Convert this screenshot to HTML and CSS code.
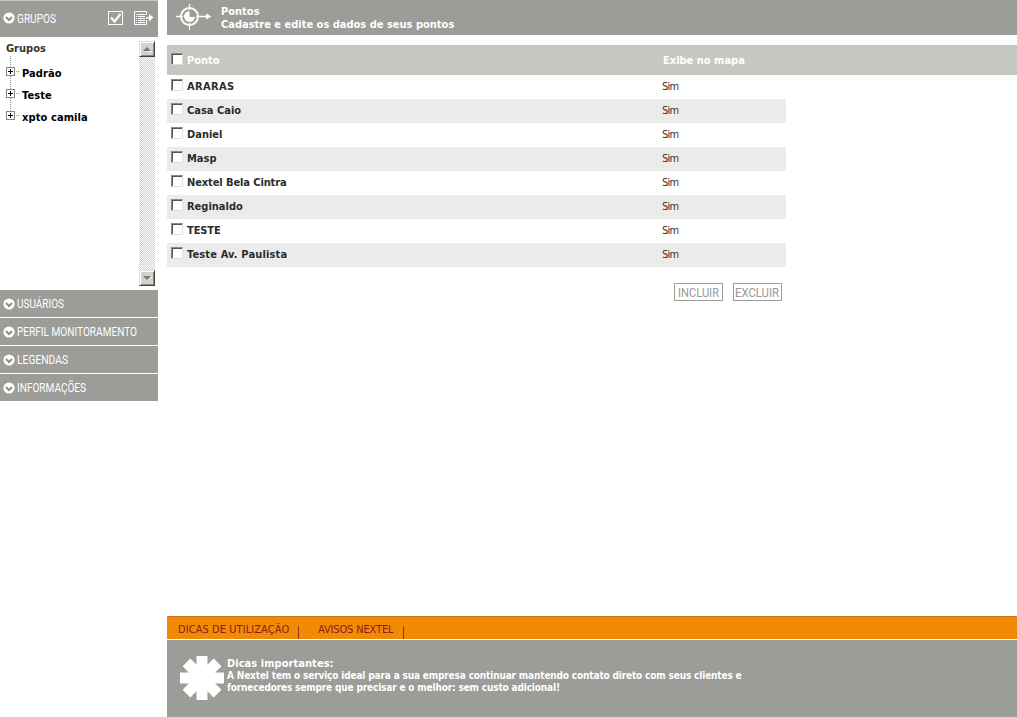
FILE: index.html
```html
<!DOCTYPE html>
<html lang="pt-BR">
<head>
<meta charset="utf-8">
<title>Pontos</title>
<link rel="stylesheet" href="styles.css">
</head>
<body>
<svg class="defs" width="0" height="0">
  <symbol id="chevron" viewBox="0 0 12 12"><circle cx="6" cy="6" r="5.6" fill="#fff"/><path d="M3 5l3 3 3-3" fill="none" stroke="#8e8e8b" stroke-width="2"/></symbol>
</svg>
<div class="app">
  <aside class="sidebar">
    <div class="side-head">
      <svg class="chev"><use href="#chevron"/></svg>
      <svg class="label" width="130" height="18"><text x="0" y="14" textLength="39" lengthAdjust="spacingAndGlyphs">GRUPOS</text></svg>
      <svg class="tool check" width="15" height="14" viewBox="0 0 15 14" fill="none" stroke="#fff"><rect x=".5" y=".5" width="14" height="13"/><path d="M3 6.500l3.500 4L12.500 3" stroke-width="2.200"/></svg>
      <svg class="tool" width="20" height="14" viewBox="0 0 20 14" fill="none" stroke="#fff"><path d="M12.500 4V.5H.5v13h12V9M2 3.500h1m1 0h7M2 5.500h1m1 0h7M2 7.500h1m1 0h7M2 9.500h1m1 0h7M2 11.500h1m1 0h7"/><path d="M12 6h3V3l4.500 3.500L15 10.500V7.500h-3z" fill="#fff" stroke="none"/></svg>
    </div>
    <div class="tree-box">
      <div class="tree">
        <div class="root">Grupos</div>
        <ul class="nodes">
          <li><i class="plus"></i><i class="dots"></i><span>Padrão</span></li>
          <li><i class="plus"></i><i class="dots"></i><span>Teste</span></li>
          <li><i class="plus"></i><i class="dots"></i><span>xpto camila</span></li>
        </ul>
      </div>
      <div class="scroll">
        <div class="arrow"><svg width="9" height="5" viewBox="0 0 9 5"><path d="M1 5h8v-1z" fill="#fff"/><path d="M0 4h8L4 0z" fill="#777"/></svg></div>
        <div class="track"></div>
        <div class="arrow"><svg width="9" height="5" viewBox="0 0 9 5"><path d="M5 5l4-4H8z" fill="#fff"/><path d="M0 0h8L4 4z" fill="#777"/></svg></div>
      </div>
    </div>
    <nav class="menu">
      <div class="item"><svg class="chev"><use href="#chevron"/></svg><svg class="label" width="130" height="18"><text x="0" y="13" textLength="47" lengthAdjust="spacingAndGlyphs">USUÁRIOS</text></svg></div>
      <div class="item"><svg class="chev"><use href="#chevron"/></svg><svg class="label" width="130" height="18"><text x="0" y="13" textLength="120" lengthAdjust="spacingAndGlyphs">PERFIL MONITORAMENTO</text></svg></div>
      <div class="item"><svg class="chev"><use href="#chevron"/></svg><svg class="label" width="130" height="18"><text x="0" y="13" textLength="51" lengthAdjust="spacingAndGlyphs">LEGENDAS</text></svg></div>
      <div class="item"><svg class="chev"><use href="#chevron"/></svg><svg class="label" width="130" height="18"><text x="0" y="13" textLength="69" lengthAdjust="spacingAndGlyphs">INFORMAÇÕES</text></svg></div>
    </nav>
  </aside>
  <main class="main">
    <header class="title">
      <svg width="36" height="28" viewBox="0 0 36 28" fill="none" stroke="#fff"><circle cx="13.500" cy="13.500" r="8.500" stroke-width="1.800"/><path d="M13.500 1v6M13.500 20v7M0 13.500h7M20 13.500h11" stroke-width="1.300"/><path d="M30 10.500l5.500 3-5.500 3z" fill="#fff" stroke="none"/><path d="M13.500 8a5.500 5.500 0 1 0 5.500 6h-5.500z" fill="#fff" stroke="none"/></svg>
      <div><div>Pontos</div><div class="sub">Cadastre e edite os dados de seus pontos</div></div>
    </header>
    <div class="thead"><i class="box"></i><span class="name">Ponto</span><span class="map">Exibe no mapa</span></div>
    <div class="rows">
      <div class="row"><i class="box"></i><span class="name wide">ARARAS</span><span class="sim">Sim</span></div>
      <div class="row"><i class="box"></i><span class="name">Casa Caio</span><span class="sim">Sim</span></div>
      <div class="row"><i class="box"></i><span class="name">Daniel</span><span class="sim">Sim</span></div>
      <div class="row"><i class="box"></i><span class="name">Masp</span><span class="sim">Sim</span></div>
      <div class="row"><i class="box"></i><span class="name tight">Nextel Bela Cintra</span><span class="sim">Sim</span></div>
      <div class="row"><i class="box"></i><span class="name">Reginaldo</span><span class="sim">Sim</span></div>
      <div class="row"><i class="box"></i><span class="name tight">TESTE</span><span class="sim">Sim</span></div>
      <div class="row"><i class="box"></i><span class="name long">Teste Av. Paulista</span><span class="sim">Sim</span></div>
    </div>
    <div class="actions">
      <div class="btn"><svg class="label" width="47" height="16"><text x="3" y="13" textLength="41" lengthAdjust="spacingAndGlyphs">INCLUIR</text></svg></div>
      <div class="btn"><svg class="label" width="47" height="16"><text x="1" y="13" textLength="44" lengthAdjust="spacingAndGlyphs">EXCLUIR</text></svg></div>
    </div>
    <footer class="footer">
      <div class="tabs"><span class="tab t1">DICAS DE UTILIZAÇÃO</span><span class="tab t2">AVISOS NEXTEL</span></div>
      <div class="tips">
        <svg width="44" height="44" viewBox="-22 -22 44 44" fill="#fff"><path id="bar" d="M-5.500-22H5.500V22H-5.500z"/><use href="#bar" transform="rotate(45)"/><use href="#bar" transform="rotate(90)"/><use href="#bar" transform="rotate(135)"/></svg>
        <div class="tiptext"><div class="tiphead">Dicas importantes:</div><div>A Nextel tem o serviço ideal para a sua empresa continuar mantendo contato direto com seus clientes e</div><div>fornecedores sempre que precisar e o melhor: sem custo adicional!</div></div>
      </div>
    </footer>
  </main>
</div>
</body>
</html>
```
FILE: styles.css
```css
body { margin: 0; background: #fff; overflow: hidden; font: bold 11px/13px "DejaVu Sans Condensed", "DejaVu Sans", sans-serif; font-stretch: condensed; white-space: nowrap; }
* { box-sizing: border-box; }
svg { display: block; flex: none; }
.defs { position: absolute; }
.app { display: flex; gap: 9px; height: 717px; }
.sidebar { width: 158px; flex: none; }
.side-head { height: 37px; border-top: 1px solid #c8c8c5; background: #9c9c99; display: flex; align-items: center; padding: 0 5px 2px 3px; }
.side-head .label { width: 91px; }
.chev { width: 12px; height: 12px; margin-right: 2px; }
.label { font: 12px Roboto, sans-serif; fill: #fff; overflow: visible; }
.tool.check { margin-right: 11px; }
.tree-box { height: 253px; display: flex; padding: 4px 3px 4px 6px; }
.tree { flex: 1; padding-top: 1px; }
.root { color: #333; height: 14px; }
.nodes { list-style: none; margin: 0; padding: 6px 0 0; background: repeating-linear-gradient(#999 0 1px, transparent 1px 2px) 4px 0 / 1px 62px no-repeat; }
.nodes li { display: flex; align-items: center; height: 22px; color: #000; letter-spacing: .1px; }
.plus { width: 9px; height: 9px; margin-top: -3px; border: 1px solid #848484; background: linear-gradient(#000, #000) 1px 3px / 5px 1px no-repeat, linear-gradient(#000, #000) 3px 1px / 1px 5px no-repeat, #fff; }
.dots { width: 4px; height: 1px; margin: -3px 3px 0 0; background: repeating-linear-gradient(90deg, transparent 0 1px, #999 1px 2px); }
.scroll { width: 16px; display: flex; flex-direction: column; }
.arrow { height: 16px; background: #d5d2cb; border: 1px solid; border-color: #ddd #444 #444 #ddd; box-shadow: inset 1px 1px #fff, inset -1px -1px #888; display: flex; align-items: center; justify-content: center; }
.track { flex: 1; background: repeating-conic-gradient(#d4d0c8 0 25%, #fff 0 50%) 0 0 / 2px 2px; }
.menu { display: grid; gap: 1px; }
.item { height: 27px; background: #9c9c99; display: flex; align-items: center; padding: 1px 0 0 3px; }
.main { flex: 1; display: flex; flex-direction: column; }
.title { height: 35px; background: #9c9c99; color: #fff; display: flex; padding: 3px 0 0 9px; gap: 9px; }
.title > div { padding-top: 2px; }
.thead { height: 30px; margin-top: 10px; background: #c7c7c2; color: #fff; display: flex; align-items: center; padding-left: 4px; }
.thead .name { width: 476px; }
.row { width: 619px; height: 24px; color: #333; display: flex; align-items: center; padding: 0 0 2px 4px; }
.row:nth-child(even) { background: #ebebeb; }
.row .name { color: #2b2b2b; }
.box { width: 12px; height: 12px; margin: -2px 4px 0 0; background: #fff; border: 1px solid; border-color: #888 #ddd #ddd #888; box-shadow: inset 1px 1px #555; }
.name { width: 475px; }
.name.wide { letter-spacing: .35px; }
.name.tight { letter-spacing: -.1px; }
.name.long { letter-spacing: .15px; }
.sim { font-weight: normal; letter-spacing: -.8px; }
.actions { display: flex; gap: 10px; margin: 16px 0 0 507px; }
.btn { width: 49px; height: 18px; border: 1px solid #9c9c99; }
.btn .label { fill: #999; font-size: 12px; }
.footer { margin-top: auto; }
.tabs { height: 24px; background: #f18b05; border-top: 1px solid #c87818; border-bottom: 1px solid #fff; display: flex; padding-left: 11px; color: #8b1a1a; font-weight: normal; line-height: 25px; }
.tab { height: 22px; background: linear-gradient(#9b3215, #9b3215) right 9px / 1px 13px no-repeat; }
.t1 { width: 121px; letter-spacing: .07px; }
.t2 { width: 86px; margin-left: 19px; letter-spacing: -.15px; }
.tips { height: 77px; background: #9c9c99; color: #fff; display: flex; gap: 3px; padding: 16px 0 0 13px; font-size: 10px; line-height: 12px; letter-spacing: -.155px; }
.tiphead { font-size: 11px; line-height: 13px; padding-top: 1px; letter-spacing: .05px; }
```
